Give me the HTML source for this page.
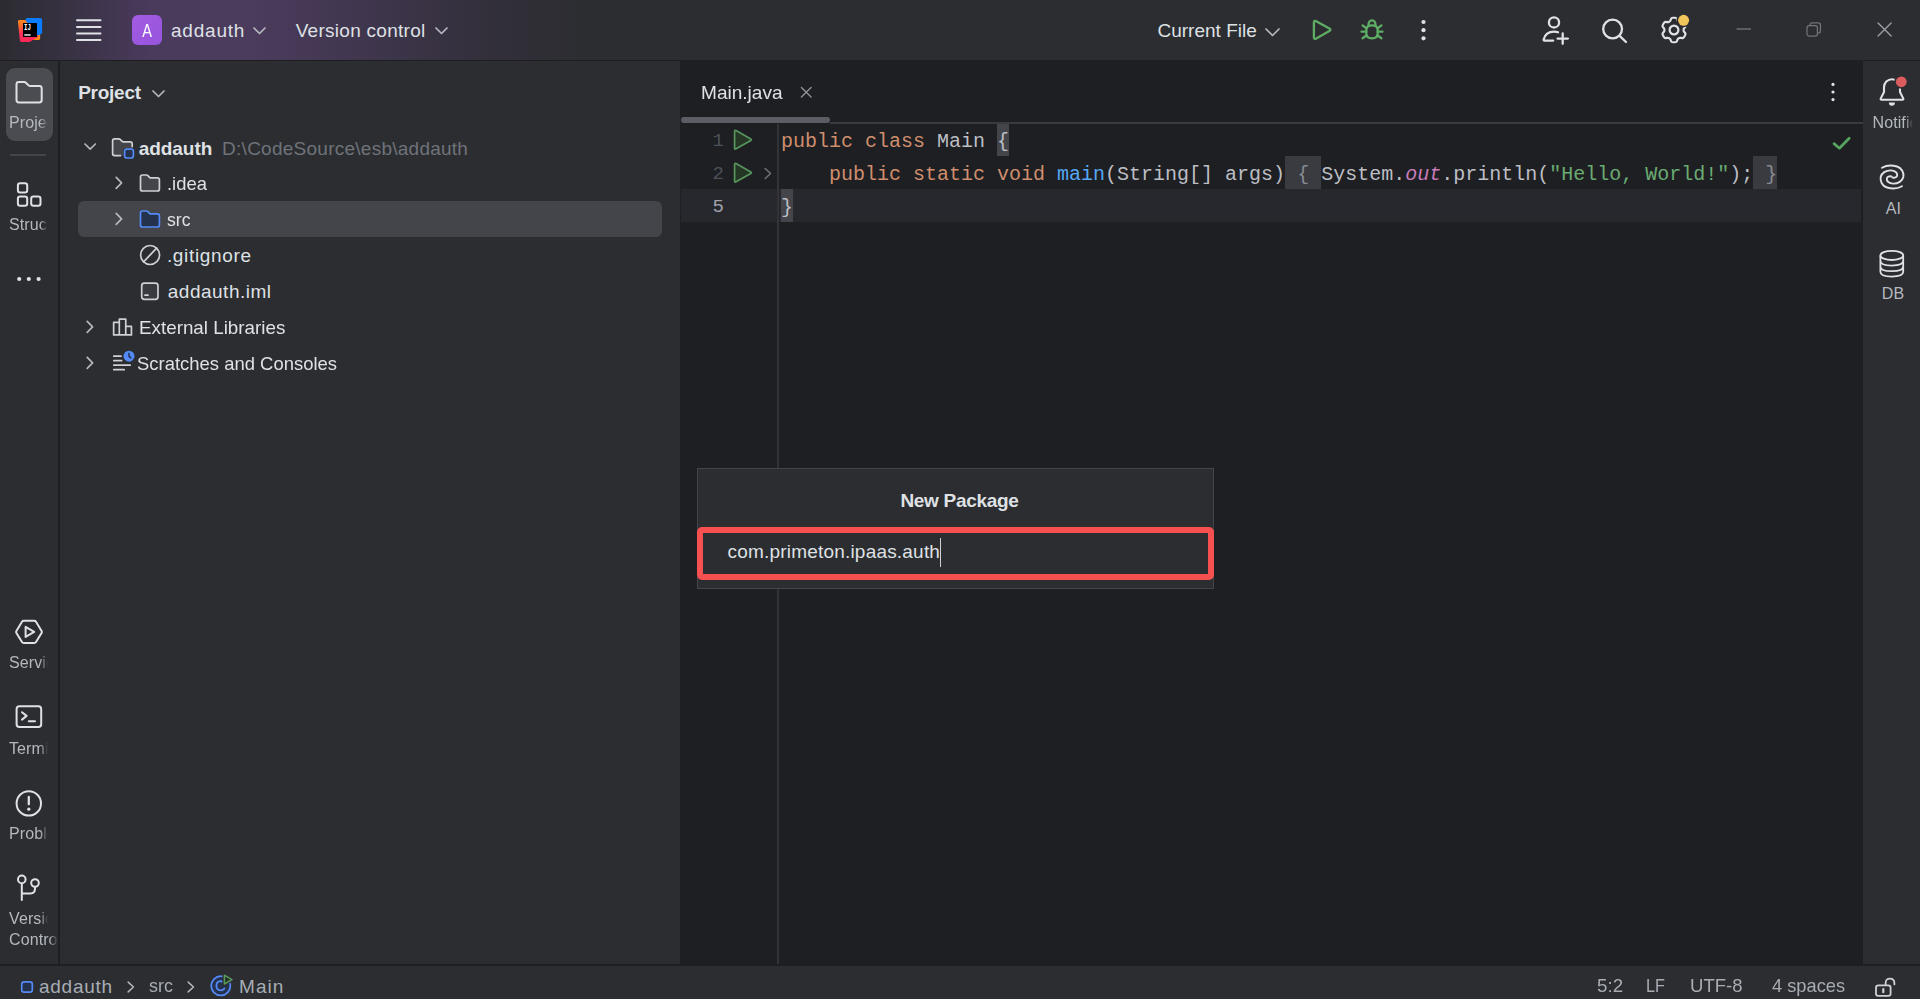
<!DOCTYPE html>
<html lang="en">
<head>
<meta charset="utf-8">
<title>addauth – Main.java</title>
<style>
*{box-sizing:border-box;margin:0;padding:0}
html,body{width:1920px;height:999px;overflow:hidden;background:#2b2d30}
body{position:relative;font-family:"Liberation Sans",sans-serif;font-size:19px;color:#dfe1e5;-webkit-font-smoothing:antialiased}
.abs{position:absolute}
svg{position:absolute;overflow:visible;display:block}
.t{position:absolute;white-space:nowrap;line-height:24px;height:24px}
.mono{font-family:"Liberation Mono",monospace;font-size:20px;letter-spacing:0}
/* regions */
#titlebar{left:0;top:0;width:1920px;height:60px;background:linear-gradient(90deg,#2c2b31 0px,#322f3a 40px,#3f354d 100px,#4a3a5c 150px,#4b3b5d 250px,#3f364d 370px,#322f3a 490px,#2b2d30 600px)}
#tb-line{left:0;top:60px;width:1920px;height:1px;background:#1e1f22}
#lstrip{left:0;top:61px;width:58px;height:903px;background:#2b2d30}
#lstrip-line{left:58px;top:61px;width:2px;height:903px;background:#1e1f22}
#proj{left:60px;top:61px;width:620px;height:903px;background:#2b2d30}
#editor{left:680px;top:61px;width:1183px;height:903px;background:#1e1f22}
#rstrip{left:1863px;top:61px;width:57px;height:903px;background:#2b2d30}
#st-line{left:0;top:964px;width:1920px;height:2px;background:#1e1f22}
#status{left:0;top:966px;width:1920px;height:33px;background:#2b2d30}
.sb{color:#a8adb5}
.lbl{position:absolute;font-size:16px;letter-spacing:.1px;line-height:20px;height:20px;color:#b4b8bf;white-space:nowrap;overflow:hidden}
</style>
</head>
<body>
<!-- ================= TITLE BAR ================= -->
<div id="titlebar" class="abs"></div>
<div id="tb-line" class="abs"></div>
<!-- IntelliJ logo -->
<svg style="left:18px;top:18px" width="24" height="24" viewBox="0 0 24 24">
  <defs>
    <linearGradient id="lg1" x1="0" y1="0" x2="0.25" y2="1"><stop offset="0" stop-color="#fd8c1c"/><stop offset=".3" stop-color="#fc6a2a"/><stop offset=".62" stop-color="#fe2d5a"/><stop offset="1" stop-color="#fe2857"/></linearGradient>
  </defs>
  <path d="M15 22H20.6Q22.1 22 22.1 20.5V16H17Z" fill="#fd8a12"/>
  <path d="M9.4 0H22.4Q24.1 0 24.1 1.7V14.4Q24.1 15.5 23.1 16L19 18H7.2L7.6 1.4Q7.8 0 9.4 0Z" fill="#087cfa"/>
  <path d="M1.3 2.1H7.3L13 10L20.5 18.4L12.4 23.5Q11.7 23.9 10.9 23.9H3.4Q2.1 23.9 1.9 22.6L-.1 3.7Q-.2 2.1 1.3 2.1Z" fill="url(#lg1)"/>
  <rect x="5" y="5" width="14" height="14" fill="#000"/>
  <text x="6" y="11.8" font-family="Liberation Mono, monospace" font-weight="700" font-size="8.2" fill="#fff" textLength="6.9" lengthAdjust="spacingAndGlyphs">IJ</text>
  <rect x="6.25" y="16.2" width="6.4" height="1.5" fill="#e6e6e6"/>
</svg>
<!-- hamburger -->
<svg style="left:76px;top:18px" width="26" height="24" viewBox="0 0 26 24" fill="none" stroke="#dfe1e5" stroke-width="2" stroke-linecap="round">
  <path d="M1 2.3H24.5M1 9H24.5M1 15.5H24.5M1 22H24.5"/>
</svg>
<!-- project badge -->
<div class="abs" style="left:132px;top:15px;width:30px;height:30px;border-radius:6px;background:linear-gradient(135deg,#a35be3 0%,#9654dc 100%)"></div>
<div class="t" style="left:132px;top:19.3px;width:30px;text-align:center;color:#fff;font-size:19.2px;transform:scaleX(.76)">A</div>
<div class="t" id="t-addauth" style="left:170.96px;top:19.3px;letter-spacing:0.792px">addauth</div>
<svg style="left:253px;top:26.5px" width="13" height="8" viewBox="0 0 13 8" fill="none" stroke="#b4b8bf" stroke-width="1.7" stroke-linecap="round" stroke-linejoin="round"><path d="M1 1L6.5 6.5L12 1"/></svg>
<div class="t" id="t-vc" style="left:295.73px;top:19.3px;letter-spacing:0.273px">Version control</div>
<svg style="left:435px;top:26.5px" width="13" height="8" viewBox="0 0 13 8" fill="none" stroke="#b4b8bf" stroke-width="1.7" stroke-linecap="round" stroke-linejoin="round"><path d="M1 1L6.5 6.5L12 1"/></svg>
<!-- run widget -->
<div class="t" id="t-cf" style="left:1157.45px;top:19.3px;letter-spacing:0.015px">Current File</div>
<svg style="left:1265px;top:27.5px" width="15" height="9" viewBox="0 0 15 9" fill="none" stroke="#b4b8bf" stroke-width="1.7" stroke-linecap="round" stroke-linejoin="round"><path d="M1 1L7.5 7.5L14 1"/></svg>
<svg style="left:1311px;top:18px" width="24" height="24" viewBox="0 0 24 24" fill="none" stroke="#5fad65" stroke-width="2.3" stroke-linejoin="round"><path d="M2.9 4.6Q2.9 2 5.2 3.3L18.4 10.5Q20.4 11.8 18.4 13L5.2 20.4Q2.9 21.6 2.9 19Z"/></svg>
<!-- bug -->
<svg style="left:1360px;top:18px" width="24" height="24" viewBox="0 0 24 24" fill="none" stroke="#5fad65" stroke-width="2.3" stroke-linecap="round" stroke-linejoin="round">
  <path d="M6.3 12Q6.3 7.4 12 7.4Q17.7 7.4 17.7 12V15.6Q17.7 20.4 12 20.4Q6.3 20.4 6.3 15.6Z"/>
  <path d="M8.4 8Q8.4 2.4 12 2.4Q15.6 2.4 15.6 8"/>
  <path d="M6.4 10.4L2.6 7.4M6.3 13.7H1.5M6.6 17.3L2.6 20.2M17.6 10.4L21.4 7.4M17.7 13.7H22.5M17.4 17.3L21.4 20.2"/>
</svg>
<svg style="left:1420px;top:18px" width="8" height="24" viewBox="0 0 8 24" fill="#dfe1e5"><circle cx="3.5" cy="4" r="2.1"/><circle cx="3.5" cy="12.2" r="2.1"/><circle cx="3.5" cy="20.3" r="2.1"/></svg>
<!-- user add -->
<svg style="left:1541px;top:15px" width="30" height="32" viewBox="0 0 30 32" fill="none" stroke="#dfe1e5" stroke-width="2.3" stroke-linecap="round" stroke-linejoin="round">
  <circle cx="13" cy="7.4" r="5.1"/>
  <path d="M12.2 25.6H3.6Q2.4 25.6 2.7 24.4Q4.6 16.6 13 16.6Q15.4 16.6 17 17.3"/>
  <path d="M21.7 18.4V28.8M16.5 23.6H26.9"/>
</svg>
<!-- search -->
<svg style="left:1600px;top:16.7px" width="30" height="28" viewBox="0 0 30 28" fill="none" stroke="#dfe1e5" stroke-width="2.3" stroke-linecap="round"><circle cx="12.6" cy="12" r="9.4"/><path d="M19.6 18.8L26 25"/></svg>
<!-- gear -->
<svg style="left:1659px;top:15px" width="30" height="30" viewBox="-15 -15 30 30" fill="none" stroke="#dfe1e5" stroke-width="2.2" stroke-linejoin="round">
  <defs><mask id="gm" maskUnits="userSpaceOnUse" x="-15" y="-15" width="30" height="30"><rect x="-15" y="-15" width="30" height="30" fill="#fff" stroke="none"/><circle cx="9.6" cy="-9.7" r="7" fill="#000" stroke="none"/></mask></defs>
  <g mask="url(#gm)"><path d="M-2.91 -11.26Q-2.60 -12.23 -1.04 -12.23L1.04 -12.23Q2.60 -12.23 2.91 -11.26L3.32 -9.96Q3.63 -8.99 4.34 -8.59L5.27 -8.05Q5.97 -7.64 6.97 -7.86L8.29 -8.15Q9.29 -8.36 10.07 -7.01L11.11 -5.21Q11.89 -3.86 11.20 -3.11L10.29 -2.10Q9.61 -1.35 9.61 -0.54L9.61 0.54Q9.61 1.35 10.29 2.10L11.20 3.11Q11.89 3.86 11.11 5.21L10.07 7.01Q9.29 8.36 8.29 8.15L6.97 7.86Q5.97 7.64 5.27 8.05L4.34 8.59Q3.63 8.99 3.32 9.96L2.91 11.26Q2.60 12.23 1.04 12.23L-1.04 12.23Q-2.60 12.23 -2.91 11.26L-3.32 9.96Q-3.63 8.99 -4.34 8.59L-5.27 8.05Q-5.97 7.64 -6.97 7.86L-8.29 8.15Q-9.29 8.36 -10.07 7.01L-11.11 5.21Q-11.89 3.86 -11.20 3.11L-10.29 2.10Q-9.61 1.35 -9.61 0.54L-9.61 -0.54Q-9.61 -1.35 -10.29 -2.10L-11.20 -3.11Q-11.89 -3.86 -11.11 -5.21L-10.07 -7.01Q-9.29 -8.36 -8.29 -8.15L-6.97 -7.86Q-5.97 -7.64 -5.27 -8.05L-4.34 -8.59Q-3.63 -8.99 -3.32 -9.96Z"/><circle cx="0" cy="0" r="4.4"/></g>
  <circle cx="9.6" cy="-9.7" r="5.5" fill="#f2c55c" stroke="none"/>
</svg>
<!-- window controls -->
<svg style="left:1736px;top:28px" width="16" height="2" viewBox="0 0 16 2"><path d="M.5 1H15" stroke="#6f737a" stroke-width="1.4"/></svg>
<svg style="left:1805.6px;top:21.8px" width="15.6" height="15.4" viewBox="0 0 17 17" fill="none" stroke="#6f737a" stroke-width="1.4"><rect x="1" y="4" width="11.5" height="11.5" rx="2.5"/><path d="M4.5 3.6V3.2Q4.5 1 6.8 1H13.4Q15.8 1 15.8 3.4V10Q15.8 12.2 13.6 12.2H13"/></svg>
<svg style="left:1877px;top:22px" width="15.2" height="15" viewBox="0 0 16 16" fill="none" stroke="#9da0a8" stroke-width="1.4" stroke-linecap="round"><path d="M1 1L15 15M15 1L1 15"/></svg>

<!-- ================= LEFT STRIPE ================= -->
<div id="lstrip" class="abs"></div>
<div id="lstrip-line" class="abs"></div>
<!-- Project button (selected) -->
<div class="abs" style="left:6px;top:67.5px;width:46.5px;height:73.5px;border-radius:9px;background:#4a4c51"></div>
<svg style="left:15px;top:80px" width="28" height="24" viewBox="0 0 28 24" fill="none" stroke="#dfe1e5" stroke-width="2" stroke-linejoin="round"><path d="M1.5 4.4Q1.5 2 3.9 2H9.2Q10.2 2 10.9 2.7L13.6 5.4Q14.3 6.1 15.3 6.1H24.3Q26.7 6.1 26.7 8.5V20Q26.7 22.4 24.3 22.4H3.9Q1.5 22.4 1.5 20Z"/></svg>
<div class="lbl" style="left:9px;top:113.0px;width:39px;-webkit-mask-image:linear-gradient(90deg,#000 80%,transparent 100%)">Project</div>
<div class="abs" style="left:10px;top:154px;width:36px;height:2px;background:#43454a"></div>
<!-- Structure -->
<svg style="left:16px;top:181px" width="26" height="26" viewBox="0 0 26 26" fill="none" stroke="#dfe1e5" stroke-width="2"><rect x="1.9" y="2.2" width="9.3" height="9.3" rx="2.3"/><rect x="1.9" y="15.4" width="9.3" height="9.3" rx="2.3"/><rect x="15.2" y="15.4" width="9.3" height="9.3" rx="2.3"/></svg>
<div class="lbl" style="left:9px;top:214.5px;width:39px;-webkit-mask-image:linear-gradient(90deg,#000 80%,transparent 100%)">Structure</div>
<svg style="left:16px;top:275px" width="26" height="8" viewBox="0 0 26 8" fill="#dfe1e5"><circle cx="3.2" cy="4" r="2.1"/><circle cx="12.8" cy="4" r="2.1"/><circle cx="22.6" cy="4" r="2.1"/></svg>
<!-- Services -->
<svg style="left:14px;top:618px" width="30" height="28" viewBox="0 0 30 28" fill="none" stroke="#dfe1e5" stroke-width="2" stroke-linejoin="round"><path d="M9.8 2.7H20.2Q21.4 2.7 22 3.7L27.6 12.9Q28.2 13.9 27.6 14.9L22 24.1Q21.4 25.1 20.2 25.1H9.8Q8.6 25.1 8 24.1L2.4 14.9Q1.8 13.9 2.4 12.9L8 3.7Q8.6 2.7 9.8 2.7Z"/><path d="M11.6 8.9V18.9L20.2 13.9Z"/></svg>
<div class="lbl" style="left:9px;top:653.0px;width:39px;-webkit-mask-image:linear-gradient(90deg,#000 80%,transparent 100%)">Services</div>
<!-- Terminal -->
<svg style="left:14px;top:704px" width="30" height="26" viewBox="0 0 30 26" fill="none" stroke="#dfe1e5" stroke-width="2" stroke-linecap="round" stroke-linejoin="round"><rect x="2.6" y="2.2" width="24.6" height="20.8" rx="2.8"/><path d="M8 8.2L12.6 11.9L8 15.6M14.8 17.2H21"/></svg>
<div class="lbl" style="left:9px;top:738.5px;width:39px;-webkit-mask-image:linear-gradient(90deg,#000 80%,transparent 100%)">Terminal</div>
<!-- Problems -->
<svg style="left:14px;top:789px" width="30" height="30" viewBox="0 0 30 30" fill="none" stroke="#dfe1e5" stroke-width="2" stroke-linecap="round"><circle cx="14.8" cy="14.4" r="12.2"/><path d="M14.8 8V15.2" stroke-width="2.3"/><circle cx="14.8" cy="20.2" r="1.6" fill="#dfe1e5" stroke="none"/></svg>
<div class="lbl" style="left:9px;top:824.0px;width:39px;-webkit-mask-image:linear-gradient(90deg,#000 80%,transparent 100%)">Problems</div>
<!-- Version Control -->
<svg style="left:15px;top:874px" width="28" height="28" viewBox="0 0 28 28" fill="none" stroke="#dfe1e5" stroke-width="2" stroke-linecap="round"><circle cx="6.8" cy="5.4" r="3.8"/><circle cx="20" cy="9" r="3.8"/><path d="M6.8 9.4V26M20 13V14.8Q20 19.4 15.4 19.4H7"/></svg>
<div class="lbl" style="left:9px;top:909.0px;width:39px;-webkit-mask-image:linear-gradient(90deg,#000 80%,transparent 100%)">Version</div>
<div class="lbl" style="left:9px;top:930.0px;width:48.5px;-webkit-mask-image:linear-gradient(90deg,#000 82%,transparent 100%)">Control</div>

<!-- ================= PROJECT PANEL ================= -->
<div id="proj" class="abs"></div>
<div class="t" id="t-project" style="left:78.14px;top:81.3px;font-weight:700;font-size:19px;letter-spacing:-0.24px">Project</div>
<svg style="left:151.5px;top:89.5px" width="13" height="8" viewBox="0 0 13 8" fill="none" stroke="#b4b8bf" stroke-width="1.7" stroke-linecap="round" stroke-linejoin="round"><path d="M1 1L6.5 6.5L12 1"/></svg>
<!-- selected row -->
<div class="abs" style="left:78px;top:201px;width:584px;height:36px;border-radius:6px;background:#43454a"></div>
<!-- row 1: addauth (center 148) -->
<svg style="left:84.3px;top:143.1px" width="12.4" height="7.6" viewBox="0 0 13 8" fill="none" stroke="#b4b8bf" stroke-width="1.7" stroke-linecap="round" stroke-linejoin="round"><path d="M1 1L6.5 6.5L12 1"/></svg>
<svg style="left:111px;top:137px" width="24" height="24" viewBox="0 0 24 24" fill="none" stroke-linejoin="round">
  <path d="M1.6 3.8Q1.6 1.8 3.6 1.8H7.6Q8.5 1.8 9.1 2.4L10.9 4.2Q11.5 4.8 12.4 4.8H19.2Q21.2 4.8 21.2 6.8V11.4H12.4V18.6H3.6Q1.6 18.6 1.6 16.6Z" stroke="none" fill="#43454a"/>
  <path d="M9.6 18.6H3.6Q1.6 18.6 1.6 16.6V3.8Q1.6 1.8 3.6 1.8H7.6Q8.5 1.8 9.1 2.4L10.9 4.2Q11.5 4.8 12.4 4.8H19.2Q21.2 4.8 21.2 6.8V9.6" stroke="#ced0d6" stroke-width="1.7" stroke-linecap="round"/>
  <rect x="13.6" y="12.2" width="8.8" height="8.8" rx="2.3" stroke="#548af7" stroke-width="1.7" fill="#25324d"/>
</svg>
<div class="t" id="t-root" style="left:138.76px;top:137px;font-weight:700;font-size:19px;letter-spacing:-0.06px">addauth</div>
<div class="t" id="t-path" style="left:222.1px;top:136.5px;color:#6f737a;letter-spacing:0.253px">D:\CodeSource\esb\addauth</div>
<!-- row 2: .idea (center 184) -->
<svg style="left:114.8px;top:176.3px" width="9" height="14" viewBox="0 0 9 14" fill="none" stroke="#b4b8bf" stroke-width="1.7" stroke-linecap="round" stroke-linejoin="round"><path d="M1.2 1.4L6.6 6.9L1.2 12.4"/></svg>
<svg style="left:138px;top:172px" width="24" height="24" viewBox="0 0 24 24" fill="#43454a" stroke="#ced0d6" stroke-width="1.7" stroke-linejoin="round"><path d="M2.5 5Q2.5 3 4.5 3H8.4Q9.3 3 9.9 3.6L11.6 5.3Q12.2 5.9 13.1 5.9H19.4Q21.4 5.9 21.4 7.9V17Q21.4 19 19.4 19H4.5Q2.5 19 2.5 17Z"/></svg>
<div class="t" id="t-idea" style="left:166.55px;top:172px;transform:scaleX(0.9703);transform-origin:0 0">.idea</div>
<!-- row 3: src (center 220) -->
<svg style="left:114.8px;top:212.3px" width="9" height="14" viewBox="0 0 9 14" fill="none" stroke="#b4b8bf" stroke-width="1.7" stroke-linecap="round" stroke-linejoin="round"><path d="M1.2 1.4L6.6 6.9L1.2 12.4"/></svg>
<svg style="left:138px;top:208px" width="24" height="24" viewBox="0 0 24 24" fill="#25324d" stroke="#548af7" stroke-width="1.7" stroke-linejoin="round"><path d="M2.5 5Q2.5 3 4.5 3H8.4Q9.3 3 9.9 3.6L11.6 5.3Q12.2 5.9 13.1 5.9H19.4Q21.4 5.9 21.4 7.9V17Q21.4 19 19.4 19H4.5Q2.5 19 2.5 17Z"/></svg>
<div class="t" id="t-src" style="left:167.45px;top:208px;transform:scaleX(0.9255);transform-origin:0 0">src</div>
<!-- row 4: .gitignore (center 256) -->
<svg style="left:138px;top:244px" width="24" height="24" viewBox="0 0 24 24" fill="none" stroke="#ced0d6" stroke-width="1.7" stroke-linecap="round"><circle cx="12.1" cy="11" r="9.5"/><path d="M5.6 17.8L18.6 4.2"/></svg>
<div class="t" id="t-git" style="left:166.91px;top:244px;letter-spacing:0.67px">.gitignore</div>
<!-- row 5: addauth.iml (center 292) -->
<svg style="left:138px;top:280px" width="24" height="24" viewBox="0 0 24 24" fill="#393b40" stroke="#ced0d6" stroke-width="1.7" stroke-linecap="round"><rect x="3.7" y="3.1" width="16.3" height="16.2" rx="2.6"/><path d="M7 15.2H10"/></svg>
<div class="t" id="t-iml" style="left:167.81px;top:280px;letter-spacing:0.495px">addauth.iml</div>
<!-- row 6: External Libraries (center 328) -->
<svg style="left:85.8px;top:320.3px" width="9" height="14" viewBox="0 0 9 14" fill="none" stroke="#b4b8bf" stroke-width="1.7" stroke-linecap="round" stroke-linejoin="round"><path d="M1.2 1.4L6.6 6.9L1.2 12.4"/></svg>
<svg style="left:111px;top:316px" width="24" height="24" viewBox="0 0 24 24" fill="none" stroke="#ced0d6" stroke-width="1.7" stroke-linejoin="round"><path d="M2.65 6.45H8.3V18.95H2.65ZM8.3 3.15H14.75V18.95H8.3ZM14.75 10.45H20.45V18.95H14.75Z"/></svg>
<div class="t" id="t-ext" style="left:138.67px;top:316px;transform:scaleX(0.9898);transform-origin:0 0">External Libraries</div>
<!-- row 7: Scratches and Consoles (center 364) -->
<svg style="left:85.8px;top:356.3px" width="9" height="14" viewBox="0 0 9 14" fill="none" stroke="#b4b8bf" stroke-width="1.7" stroke-linecap="round" stroke-linejoin="round"><path d="M1.2 1.4L6.6 6.9L1.2 12.4"/></svg>
<svg style="left:111px;top:352px" width="24" height="24" viewBox="0 0 24 24" fill="none" stroke="#ced0d6" stroke-width="1.7" stroke-linecap="round"><path d="M2.8 4.2H10M2.8 8.7H10.6M2.8 13.2H19.2M2.8 17.7H13.2"/><circle cx="18" cy="4.2" r="5.5" fill="#548af7" stroke="none"/><path d="M18 1.6V4.4L19.9 5.8" stroke="#25324d" stroke-width="1.5" stroke-linejoin="round"/></svg>
<div class="t" id="t-scr" style="left:137.23px;top:352px;transform:scaleX(0.971);transform-origin:0 0">Scratches and Consoles</div>

<!-- ================= EDITOR ================= -->
<div id="editor" class="abs"></div>
<!-- tab -->
<div class="t" id="t-tab" style="left:700.85px;top:80.8px;transform:scaleX(1.0033);transform-origin:0 0">Main.java</div>
<svg style="left:800px;top:85.8px" width="12.5" height="12.5" viewBox="0 0 13 13" fill="none" stroke="#90939b" stroke-width="1.4" stroke-linecap="round"><path d="M1.5 1.5L11.5 11.5M11.5 1.5L1.5 11.5"/></svg>
<div class="abs" style="left:830px;top:122px;width:1033px;height:2px;background:#393b40"></div>
<div class="abs" style="left:681px;top:117px;width:149px;height:6px;border-radius:3px;background:#5a5d63"></div>
<svg style="left:1829px;top:80px" width="8" height="24" viewBox="0 0 8 24" fill="#dfe1e5"><circle cx="4" cy="4.4" r="1.6"/><circle cx="4" cy="12" r="1.6"/><circle cx="4" cy="19.6" r="1.6"/></svg>
<!-- caret row -->
<div class="abs" style="left:681px;top:189px;width:1180px;height:33px;background:#26282e"></div>
<!-- gutter separator -->
<div class="abs" style="left:777.4px;top:124px;width:1.9px;height:840px;background:#313337"></div>
<!-- line numbers -->
<div class="t mono" style="left:690px;width:34px;text-align:right;font-size:19px;top:128.6px;color:#4b5059">1</div>
<div class="t mono" style="left:690px;width:34px;text-align:right;font-size:19px;top:161.6px;color:#4b5059">2</div>
<div class="t mono" style="left:690px;width:34px;text-align:right;font-size:19px;top:194.6px;color:#a1a3ab">5</div>
<!-- run gutter icons -->
<svg style="left:732.6px;top:129px" width="20" height="22" viewBox="0 0 20 22" fill="#253627" stroke="#57965c" stroke-width="1.7" stroke-linejoin="round"><path d="M1.6 2.4Q1.6 .8 3 1.6L17.8 9.9Q19 10.6 17.8 11.4L3 19.8Q1.6 20.6 1.6 19Z"/></svg>
<svg style="left:732.6px;top:162px" width="20" height="22" viewBox="0 0 20 22" fill="#253627" stroke="#57965c" stroke-width="1.7" stroke-linejoin="round"><path d="M1.6 2.4Q1.6 .8 3 1.6L17.8 9.9Q19 10.6 17.8 11.4L3 19.8Q1.6 20.6 1.6 19Z"/></svg>
<svg style="left:764.2px;top:166.8px" width="8.5" height="13" viewBox="0 0 9 13" fill="none" stroke="#6f737a" stroke-width="1.6" stroke-linecap="round" stroke-linejoin="round"><path d="M1.2 1.2L7 6.5L1.2 11.8"/></svg>
<!-- code -->
<div class="abs" style="left:997px;top:124px;width:12.3px;height:32px;background:#43454a"></div>
<div class="abs" style="left:781px;top:189px;width:11.8px;height:33px;background:#43454a"></div>
<div class="abs" style="left:1285px;top:156px;width:35.7px;height:33px;background:#393b40"></div>
<div class="abs" style="left:1753px;top:156px;width:23.6px;height:33px;background:#393b40"></div>
<div class="t mono" id="c1" style="left:781px;top:129.5px;color:#bcbec4"><span style="color:#cf8e6d">public class</span> Main {</div>
<div class="t mono" id="c2" style="left:781px;top:162.5px;color:#bcbec4;white-space:pre">    <span style="color:#cf8e6d">public static void</span> <span style="color:#56a8f5">main</span>(String[] args)<span style="color:#868a91"> { </span>System.<i style="color:#c77dbb">out</i>.println(<span style="color:#6aab73">"Hello, World!"</span>);<span style="color:#868a91"> }</span></div>
<div class="t mono" id="c3" style="left:781px;top:195.5px;color:#bcbec4">}</div>
<!-- inspection ok -->
<svg style="left:1832px;top:136px" width="20" height="15" viewBox="0 0 20 15" fill="none" stroke="#57a55f" stroke-width="2.7" stroke-linejoin="round" stroke-linecap="round"><path d="M2 7.6L7.4 12.2L17.2 2.2"/></svg>

<!-- ================= RIGHT STRIPE ================= -->
<div id="rstrip" class="abs"></div>
<!-- Notifications -->
<svg style="left:1878px;top:77px" width="30" height="30" viewBox="0 0 30 30" fill="none" stroke="#dfe1e5" stroke-width="2.1" stroke-linecap="round" stroke-linejoin="round">
  <defs><mask id="bm" maskUnits="userSpaceOnUse" x="0" y="-2" width="32" height="34"><rect x="0" y="-2" width="32" height="34" fill="#fff" stroke="none"/><circle cx="23.3" cy="4.8" r="7" fill="#000" stroke="none"/></mask></defs>
  <g mask="url(#bm)"><path d="M6 15V10.2A8 8 0 0 1 22 10.2V15L25.2 21.4Q25.8 22.8 24.3 22.8H3.7Q2.2 22.8 2.8 21.4Z"/></g>
  <path d="M10.9 25.4A3 3.3 0 0 0 16.9 25.4Z" fill="#dfe1e5" stroke="none"/>
  <circle cx="23.3" cy="4.8" r="5.4" fill="#db5c5c" stroke="none"/>
</svg>
<div class="lbl" style="left:1872.5px;top:113.0px;width:40px;-webkit-mask-image:linear-gradient(90deg,#000 80%,transparent 100%)">Notifications</div>
<!-- AI -->
<svg style="left:1877.8px;top:162.8px" width="28" height="28" viewBox="-14 -14 28 28" fill="none" stroke="#dfe1e5" stroke-width="1.9" stroke-linecap="round"><path d="M-10 -9.2C-6 -11.5 0 -12 5 -10.5C10 -9 12 -4 11.3 0C10.5 4 6 6.8 1 6.6C-3 6.4 -5.6 4 -5.2 1.6C-4.9 -.4 -2.5 -1.2 -.6 -.5"/><path d="M10 9.2C6 11.5 0 12 -5 10.5C-10 9 -12 4 -11.3 0C-10.5 -4 -6 -6.8 -1 -6.6C3 -6.4 5.6 -4 5.2 -1.6C4.9 .4 2.5 1.2 .6 .5"/></svg>
<div class="lbl" style="left:1865px;top:198.5px;width:57px;text-align:center">AI</div>
<!-- DB -->
<svg style="left:1878px;top:249px" width="28" height="30" viewBox="0 0 28 30" fill="none" stroke="#dfe1e5" stroke-width="1.8"><ellipse cx="13.8" cy="6.4" rx="11.4" ry="4.6"/><path d="M2.4 6.4V22.8Q2.4 27.6 13.8 27.6Q25.2 27.6 25.2 22.8V6.4M2.4 11.8Q2.4 16.6 13.8 16.6Q25.2 16.6 25.2 11.8M2.4 17.4Q2.4 22.2 13.8 22.2Q25.2 22.2 25.2 17.4"/></svg>
<div class="lbl" style="left:1864.5px;top:284.0px;width:57px;text-align:center">DB</div>

<!-- ================= STATUS BAR ================= -->
<div id="st-line" class="abs"></div>
<div id="status" class="abs"></div>
<svg style="left:20px;top:980px" width="14" height="14" viewBox="0 0 14 14"><rect x="1.7" y="1.9" width="10.6" height="10.2" rx="2.4" fill="#25324d" stroke="#548af7" stroke-width="1.7"/></svg>
<div class="t sb" id="s-addauth" style="left:39.05px;top:975.1px;letter-spacing:0.72px">addauth</div>
<svg style="left:126.7px;top:980.6px" width="8.4" height="12" viewBox="0 0 9 13" fill="none" stroke="#b4b8bf" stroke-width="1.6" stroke-linecap="round" stroke-linejoin="round"><path d="M1.2 1.2L7 6.5L1.2 11.8"/></svg>
<div class="t sb" id="s-src" style="left:149.05px;top:974.4px;transform:scaleX(0.9444);transform-origin:0 0">src</div>
<svg style="left:186.7px;top:980.6px" width="8.4" height="12" viewBox="0 0 9 13" fill="none" stroke="#b4b8bf" stroke-width="1.6" stroke-linecap="round" stroke-linejoin="round"><path d="M1.2 1.2L7 6.5L1.2 11.8"/></svg>
<svg style="left:209px;top:973px" width="26" height="25" viewBox="0 0 26 25" fill="none"><circle cx="11.8" cy="12.8" r="9.6" stroke="#548af7" stroke-width="1.8" fill="#25324d"/><path d="M15.4 10.2Q14 8.2 11.6 8.2Q7.4 8.4 7.4 12.8Q7.4 17.2 11.6 17.4Q14 17.4 15.4 15.4" stroke="#548af7" stroke-width="1.8" stroke-linecap="round"/><path d="M14.6 .8V12.4L24 6.6Z" fill="#2b2d30" stroke="#2b2d30" stroke-width="2.4" stroke-linejoin="round"/><path d="M15.4 2.2V11L23 6.6Z" fill="#253627" stroke="#57965c" stroke-width="1.5" stroke-linejoin="round"/></svg>
<div class="t sb" id="s-main" style="left:239.1px;top:975.1px;letter-spacing:1.05px">Main</div>
<div class="t sb" id="s-pos" style="left:1597.39px;top:974.4px;transform:scaleX(0.9863);transform-origin:0 0">5:2</div>
<div class="t sb" id="s-lf" style="left:1646.15px;top:974.4px;transform:scaleX(0.8547);transform-origin:0 0">LF</div>
<div class="t sb" id="s-utf" style="left:1690.28px;top:974.4px;transform:scaleX(0.9761);transform-origin:0 0">UTF-8</div>
<div class="t sb" id="s-sp" style="left:1772.23px;top:974.4px;transform:scaleX(0.9606);transform-origin:0 0">4 spaces</div>
<svg style="left:1874px;top:976px" width="24" height="22" viewBox="0 0 24 22" fill="none" stroke="#ced0d6" stroke-width="1.8" stroke-linecap="round"><rect x="2" y="9.4" width="14.6" height="10.4" rx="2.4"/><path d="M11.6 9V7.2Q11.6 2.6 16 2.6Q20.4 2.6 20.4 7.2V8.4"/><path d="M9.3 13V16.2" stroke-width="2.2"/></svg>

<!-- ================= DIALOG ================= -->
<div class="abs" style="left:697px;top:468px;width:517px;height:121px;background:#2b2d30;border:1px solid #43454a"></div>
<div class="t" id="d-title" style="left:900.45px;top:488.8px;font-weight:700;font-size:19px;letter-spacing:-0.315px">New Package</div>
<div class="abs" style="left:697px;top:526.5px;width:517px;height:53.5px;border:6px solid #f75050;border-radius:5px;background:#2b2d30"></div>
<div class="t" id="d-input" style="left:727.45px;top:540.3px;letter-spacing:0.202px">com.primeton.ipaas.auth</div>
<div class="abs" id="caret" style="left:940px;top:538px;width:1.3px;height:29px;background:#ced0d6"></div>

</body>
</html>
